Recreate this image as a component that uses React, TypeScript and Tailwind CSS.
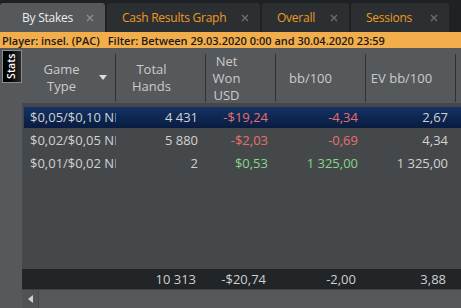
import React from 'react';

type Row = {
  game: string;
  hands: string;
  net: string;
  bb: string;
  ev: string;
  tone: 'red' | 'green';
  selected?: boolean;
};

const rows: Row[] = [
  { game: '$0,05/$0,10 NL', hands: '4 431', net: '-$19,24', bb: '-4,34', ev: '2,67', tone: 'red', selected: true },
  { game: '$0,02/$0,05 NL', hands: '5 880', net: '-$2,03', bb: '-0,69', ev: '4,34', tone: 'red' },
  { game: '$0,01/$0,02 NL', hands: '2', net: '$0,53', bb: '1 325,00', ev: '1 325,00', tone: 'green' },
];

const tabs = [
  { label: 'By Stakes', w: 'w-[105px]', active: true },
  { label: 'Cash Results Graph', w: 'w-[153px]' },
  { label: 'Overall', w: 'w-[87px]' },
  { label: 'Sessions', w: 'w-[98px]' },
];

function CloseX({ light }: { light?: boolean }) {
  return (
    <svg width="8" height="8" viewBox="0 0 8 8" className="shrink-0">
      <path d="M1 1L7 7M7 1L1 7" stroke={light ? '#8e9193' : '#6c6f72'} strokeWidth="1.3" />
    </svg>
  );
}

export default function App() {
  return (
    <div className="w-[461px] h-[308px] overflow-hidden flex flex-col bg-[#1f2225] font-['Open_Sans',sans-serif] text-[12px]">
      {/* tab strip */}
      <div className="h-[32px] flex items-end gap-[2px] shrink-0">
        {tabs.map((t) => (
          <div
            key={t.label}
            className={`${t.w} h-[29px] rounded-t-[3px] flex items-center justify-between pr-[11px] ${
              t.active ? 'bg-[#55595c] text-[#ececec] pl-[22px]' : 'bg-[#2c2f32] text-[#ee9a22] pl-[15px]'
            }`}
          >
            <span className="text-[12px] tracking-[-0.25px] leading-none">{t.label}</span>
            <CloseX light={t.active} />
          </div>
        ))}
      </div>

      {/* filter bar */}
      <div className="h-[16px] shrink-0 bg-[#f2ae4a] flex items-center pl-[2px] text-[#1a1a1a] text-[11px] font-semibold leading-none whitespace-nowrap">
        <span>Player: insel. (PAC)</span>
        <span className="ml-[8px]">Filter: Between 29.03.2020 0:00 and 30.04.2020 23:59</span>
      </div>

      <div className="flex-1 flex min-h-0 bg-[#56595c]">
        {/* side strip */}
        <div className="w-[22px] shrink-0 pt-[2px] pl-[2px]">
          <div className="w-[20px] h-[33px] border border-[#8a8d90] bg-gradient-to-r from-[#000] to-[#2a2a2a] flex items-center justify-center">
            <span className="-rotate-90 text-white text-[10.5px] font-semibold leading-none">Stats</span>
          </div>
        </div>

        {/* grid */}
        <div className="flex-1 flex flex-col min-w-0">
          <div className="h-[55px] shrink-0 flex pt-[6px] pb-[1px] text-[#cbcbcb] text-[13px] leading-[17px] text-center">
            <div className="w-[94px] flex items-center border-r border-[#2f3234] pl-[4px]">
              <span className="flex-1 pr-[2px]">Game<br />Type</span>
              <svg width="8" height="5" viewBox="0 0 8 5" className="mr-[8px] mb-[2px]">
                <path d="M0 0H8L4 5Z" fill="#dcdcdc" />
              </svg>
            </div>
            <div className="w-[90px] flex items-center justify-center border-r border-[#2f3234] pr-[18px]">
              <span>Total<br />Hands</span>
            </div>
            <div className="w-[70px] flex items-center justify-center border-r border-[#2f3234] pr-[28px]">
              <span>Net<br />Won<br />USD</span>
            </div>
            <div className="w-[90px] flex items-center justify-center border-r border-[#2f3234] pr-[20px]">
              <span>bb/100</span>
            </div>
            <div className="w-[90px] flex items-center justify-center border-r border-[#2f3234] pr-[18px]">
              <span>EV bb/100</span>
            </div>
            <div className="flex-1" />
          </div>

          <div className="flex-1 bg-[#45484b] pt-[3px] flex flex-col">
            {rows.map((r) => {
              const col = r.tone === 'red' ? 'text-[#e8706f]' : 'text-[#86d786]';
              return (
                <div key={r.game} className="h-[23px] flex py-[1px] pl-[2px]">
                  <div
                    className={`flex-1 flex items-center text-[13px] leading-none text-[#d2d2d2] ${
                      r.selected ? 'bg-gradient-to-b from-[#133263] to-[#091c40]' : ''
                    }`}
                  >
                    <div className="w-[92px] pl-[6px] pr-[2px] overflow-hidden whitespace-nowrap">{r.game}</div>
                    <div className="w-[90px] text-right pr-[8px]">{r.hands}</div>
                    <div className={`w-[70px] text-right pr-[8px] ${col}`}>{r.net}</div>
                    <div className={`w-[90px] text-right pr-[8px] ${col}`}>{r.bb}</div>
                    <div className="w-[90px] text-right pr-[8px]">{r.ev}</div>
                    <div className="flex-1" />
                  </div>
                </div>
              );
            })}
          </div>

          {/* totals */}
          <div className="h-[20px] shrink-0 bg-[#222528] flex items-center text-[13px] leading-none text-[#cfcfcf]">
            <div className="w-[94px]" />
            <div className="w-[90px] text-right pr-[10px]">10 313</div>
            <div className="w-[70px] text-right pr-[10px]">-$20,74</div>
            <div className="w-[90px] text-right pr-[10px]">-2,00</div>
            <div className="w-[90px] text-right pr-[10px]">3,88</div>
          </div>

          {/* scrollbar */}
          <div className="h-[19px] shrink-0 flex border-t border-[#3e4144] bg-[#56595c]">
            <div className="w-[17px] flex items-center justify-center border-r border-[#45484b] bg-[#505356]">
              <svg width="5" height="8" viewBox="0 0 5 8">
                <path d="M5 0V8L0 4Z" fill="#cfd1d3" />
              </svg>
            </div>
            <div className="flex-1" />
          </div>
        </div>
      </div>
    </div>
  );
}
